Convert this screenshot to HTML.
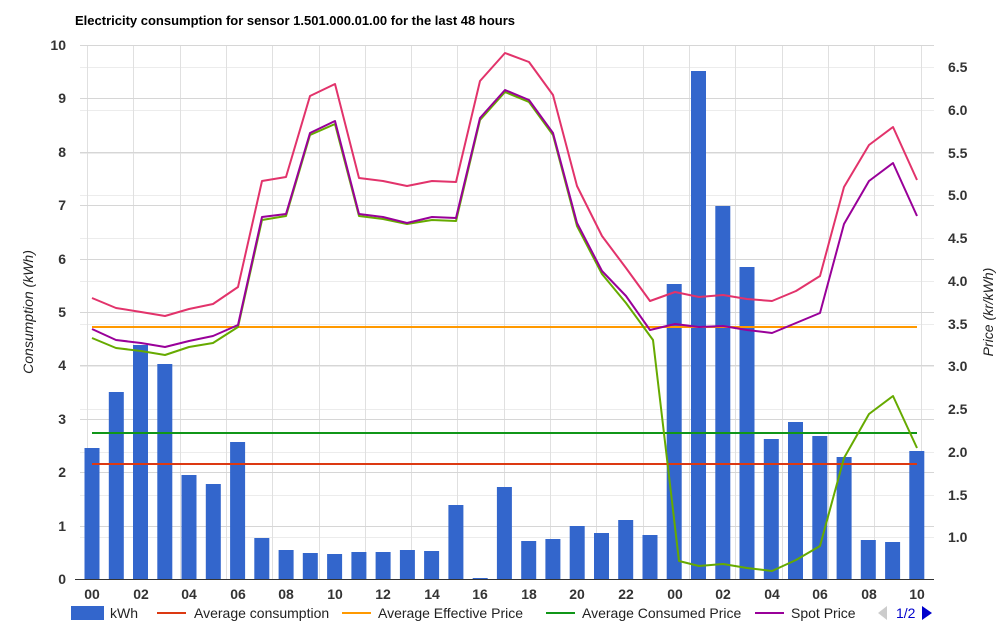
<!DOCTYPE html>
<html><head><meta charset="utf-8"><style>
html,body{margin:0;padding:0;background:#fff;}
svg{display:block;font-family:"Liberation Sans",Arial,sans-serif;}
</style></head><body>
<svg width="1000" height="644" viewBox="0 0 1000 644">
<text x="75" y="25" font-size="13" font-weight="bold" fill="#000">Electricity consumption for sensor 1.501.000.01.00 for the last 48 hours</text>
<g stroke="#ececec" stroke-width="1">
<line x1="80" x2="934" y1="67.5" y2="67.5"/><line x1="80" x2="934" y1="110.5" y2="110.5"/><line x1="80" x2="934" y1="153.5" y2="153.5"/><line x1="80" x2="934" y1="195.5" y2="195.5"/><line x1="80" x2="934" y1="238.5" y2="238.5"/><line x1="80" x2="934" y1="281.5" y2="281.5"/><line x1="80" x2="934" y1="324.5" y2="324.5"/><line x1="80" x2="934" y1="366.5" y2="366.5"/><line x1="80" x2="934" y1="409.5" y2="409.5"/><line x1="80" x2="934" y1="452.5" y2="452.5"/><line x1="80" x2="934" y1="495.5" y2="495.5"/><line x1="80" x2="934" y1="537.5" y2="537.5"/>
</g>
<g stroke="#e0e0e0" stroke-width="1">
<line y1="45" y2="579" x1="87.5" x2="87.5"/><line y1="45" y2="579" x1="133.5" x2="133.5"/><line y1="45" y2="579" x1="180.5" x2="180.5"/><line y1="45" y2="579" x1="226.5" x2="226.5"/><line y1="45" y2="579" x1="272.5" x2="272.5"/><line y1="45" y2="579" x1="319.5" x2="319.5"/><line y1="45" y2="579" x1="365.5" x2="365.5"/><line y1="45" y2="579" x1="411.5" x2="411.5"/><line y1="45" y2="579" x1="457.5" x2="457.5"/><line y1="45" y2="579" x1="504.5" x2="504.5"/><line y1="45" y2="579" x1="550.5" x2="550.5"/><line y1="45" y2="579" x1="596.5" x2="596.5"/><line y1="45" y2="579" x1="643.5" x2="643.5"/><line y1="45" y2="579" x1="689.5" x2="689.5"/><line y1="45" y2="579" x1="735.5" x2="735.5"/><line y1="45" y2="579" x1="782.5" x2="782.5"/><line y1="45" y2="579" x1="828.5" x2="828.5"/><line y1="45" y2="579" x1="874.5" x2="874.5"/><line y1="45" y2="579" x1="921.5" x2="921.5"/>
</g>
<g stroke="#d6d6d6" stroke-width="1">
<line x1="80" x2="934" y1="45.5" y2="45.5"/><line x1="80" x2="934" y1="98.5" y2="98.5"/><line x1="80" x2="934" y1="152.5" y2="152.5"/><line x1="80" x2="934" y1="205.5" y2="205.5"/><line x1="80" x2="934" y1="259.5" y2="259.5"/><line x1="80" x2="934" y1="312.5" y2="312.5"/><line x1="80" x2="934" y1="365.5" y2="365.5"/><line x1="80" x2="934" y1="419.5" y2="419.5"/><line x1="80" x2="934" y1="472.5" y2="472.5"/><line x1="80" x2="934" y1="526.5" y2="526.5"/>
</g>
<g fill="#3366cc">
<rect x="84.5" y="448" width="15" height="131"/>
<rect x="108.8" y="392" width="15" height="187"/>
<rect x="133" y="345" width="15" height="234"/>
<rect x="157.3" y="364" width="15" height="215"/>
<rect x="181.5" y="475" width="15" height="104"/>
<rect x="205.8" y="484" width="15" height="95"/>
<rect x="230.1" y="442" width="15" height="137"/>
<rect x="254.3" y="538" width="15" height="41"/>
<rect x="278.6" y="550" width="15" height="29"/>
<rect x="302.8" y="553" width="15" height="26"/>
<rect x="327.1" y="554" width="15" height="25"/>
<rect x="351.4" y="552" width="15" height="27"/>
<rect x="375.6" y="552" width="15" height="27"/>
<rect x="399.9" y="550" width="15" height="29"/>
<rect x="424.1" y="551" width="15" height="28"/>
<rect x="448.4" y="505" width="15" height="74"/>
<rect x="472.7" y="578" width="15" height="1"/>
<rect x="496.9" y="487" width="15" height="92"/>
<rect x="521.2" y="541" width="15" height="38"/>
<rect x="545.4" y="539" width="15" height="40"/>
<rect x="569.7" y="526" width="15" height="53"/>
<rect x="594" y="533" width="15" height="46"/>
<rect x="618.2" y="520" width="15" height="59"/>
<rect x="642.5" y="535" width="15" height="44"/>
<rect x="666.7" y="284" width="15" height="295"/>
<rect x="691" y="71" width="15" height="508"/>
<rect x="715.3" y="206" width="15" height="373"/>
<rect x="739.5" y="267" width="15" height="312"/>
<rect x="763.8" y="439" width="15" height="140"/>
<rect x="788" y="422" width="15" height="157"/>
<rect x="812.3" y="436" width="15" height="143"/>
<rect x="836.6" y="457" width="15" height="122"/>
<rect x="860.8" y="540" width="15" height="39"/>
<rect x="885.1" y="542" width="15" height="37"/>
<rect x="909.3" y="451" width="15" height="128"/>
</g>
<line x1="75" x2="934" y1="579.5" y2="579.5" stroke="#333" stroke-width="1"/>
<line x1="92" x2="917" y1="327" y2="327" stroke="#ff9900" stroke-width="2"/>
<line x1="92" x2="917" y1="433" y2="433" stroke="#109618" stroke-width="2"/>
<line x1="92" x2="917" y1="464" y2="464" stroke="#dc3912" stroke-width="2"/>
<g fill="none" stroke-width="2" stroke-linejoin="round">
<polyline stroke="#e2336b" points="92,298 116,308 141,312 165,316 189,309 213,304 238,287 262,181 286,177 310,96 335,84 359,178 383,181 407,186 432,181 456,182 480,81 505,53 529,62 553,95 577,186 602,236 626,268 650,301 675,292 699,297 723,295 747,299 772,301 796,291 820,276 844,187 869,145 893,127 917,180"/>
<polyline stroke="#66aa00" points="92,338 116,348 141,351 165,355 189,347 213,343 238,327 262,220 286,216 310,135 335,124 359,216 383,219 407,224 432,220 456,221 480,120 505,92 529,102 553,135 577,226 602,274 626,303 653,340 679,561 699,566 723,564 747,568 772,571 796,560 820,546 844,458 869,414 893,396 917,448"/>
<polyline stroke="#990099" points="92,329 116,340 141,343 165,347 189,341 213,336 238,325 262,217 286,214 310,133 335,121 359,214 383,217 407,223 432,217 456,218 480,118 505,90 529,100 553,133 577,223 602,271 626,296 650,330 675,324 699,327 723,326 747,330 772,333 796,323 820,313 844,224 869,181 893,163 917,216"/>
</g>
<g font-size="14" font-weight="bold" fill="#333" text-anchor="end">
<text x="66" y="50">10</text><text x="66" y="103">9</text><text x="66" y="157">8</text><text x="66" y="210">7</text><text x="66" y="264">6</text><text x="66" y="317">5</text><text x="66" y="370">4</text><text x="66" y="424">3</text><text x="66" y="477">2</text><text x="66" y="531">1</text><text x="66" y="584">0</text>
</g>
<g font-size="14" font-weight="bold" fill="#333">
<text x="948" y="72">6.5</text><text x="948" y="115">6.0</text><text x="948" y="158">5.5</text><text x="948" y="200">5.0</text><text x="948" y="243">4.5</text><text x="948" y="286">4.0</text><text x="948" y="329">3.5</text><text x="948" y="371">3.0</text><text x="948" y="414">2.5</text><text x="948" y="457">2.0</text><text x="948" y="500">1.5</text><text x="948" y="542">1.0</text>
</g>
<text transform="translate(33,312) rotate(-90)" font-size="14" font-style="italic" fill="#222" text-anchor="middle">Consumption (kWh)</text>
<text transform="translate(993,312) rotate(-90)" font-size="14" font-style="italic" fill="#222" text-anchor="middle">Price (kr/kWh)</text>
<g font-size="14" font-weight="bold" fill="#333" text-anchor="middle">
<text x="92" y="599">00</text><text x="141" y="599">02</text><text x="189" y="599">04</text><text x="238" y="599">06</text><text x="286" y="599">08</text><text x="335" y="599">10</text><text x="383" y="599">12</text><text x="432" y="599">14</text><text x="480" y="599">16</text><text x="529" y="599">18</text><text x="577" y="599">20</text><text x="626" y="599">22</text><text x="675" y="599">00</text><text x="723" y="599">02</text><text x="772" y="599">04</text><text x="820" y="599">06</text><text x="869" y="599">08</text><text x="917" y="599">10</text>
</g>
<rect x="71" y="606" width="33" height="14" fill="#3366cc"/>
<text x="110" y="618" font-size="14" fill="#222">kWh</text>
<line x1="157" x2="186" y1="613" y2="613" stroke="#dc3912" stroke-width="2"/>
<text x="194" y="618" font-size="14" fill="#222">Average consumption</text>
<line x1="342" x2="371" y1="613" y2="613" stroke="#ff9900" stroke-width="2"/>
<text x="378" y="618" font-size="14" fill="#222">Average Effective Price</text>
<line x1="546" x2="575" y1="613" y2="613" stroke="#109618" stroke-width="2"/>
<text x="582" y="618" font-size="14" fill="#222">Average Consumed Price</text>
<line x1="755" x2="784" y1="613" y2="613" stroke="#990099" stroke-width="2"/>
<text x="791" y="618" font-size="14" fill="#222">Spot Price</text>
<polygon points="878,613 887,606 887,620" fill="#ccc"/>
<text x="896" y="618" font-size="14" fill="#0000cc">1/2</text>
<polygon points="922,606 932,613 922,620" fill="#0000cc"/>
</svg>
</body></html>
